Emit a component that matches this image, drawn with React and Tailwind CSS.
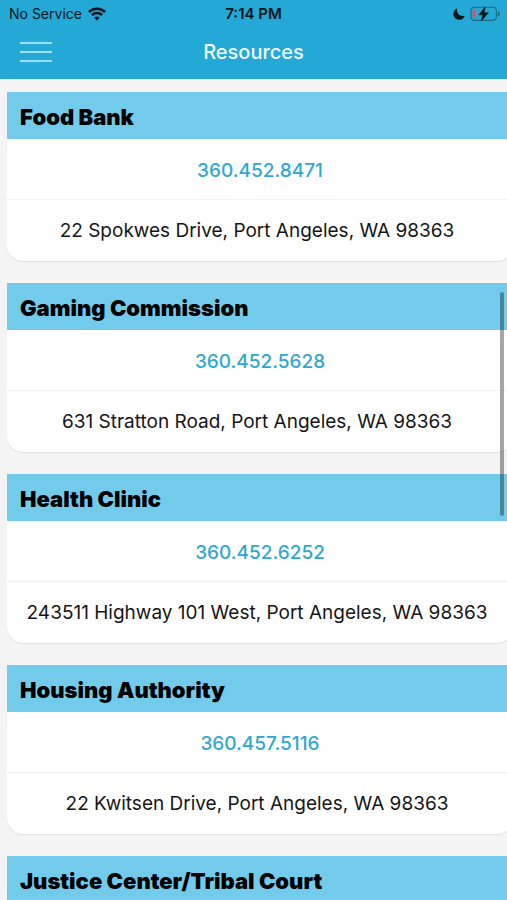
import React from 'react';

const resources = [
  { name: 'Food Bank', phone: '360.452.8471', address: '22 Spokwes Drive, Port Angeles, WA 98363' },
  { name: 'Gaming Commission', phone: '360.452.5628', address: '631 Stratton Road, Port Angeles, WA 98363' },
  { name: 'Health Clinic', phone: '360.452.6252', address: '243511 Highway 101 West, Port Angeles, WA 98363' },
  { name: 'Housing Authority', phone: '360.457.5116', address: '22 Kwitsen Drive, Port Angeles, WA 98363' },
  { name: 'Justice Center/Tribal Court' },
];

const WifiIcon = () => (
  <svg width="18" height="14" viewBox="0 0 18 14" fill="none" stroke="#04161d" strokeWidth="2.5">
    <path d="M0.9 5C5.3 0.6 12.7 0.6 17.1 5" />
    <path d="M3.9 8.2C6.7 5.4 11.3 5.4 14.1 8.2" />
    <path d="M9 13.4L6.3 10.7C7.8 9.2 10.2 9.2 11.7 10.7Z" fill="#04161d" stroke="none" />
  </svg>
);

const MoonIcon = () => (
  <svg width="12" height="12" viewBox="0 0 12 12" fill="#04161d">
    <path d="M4.2 0.3C2.9 4.9 6.6 9 11.7 7.9C10.6 10.5 8.5 11.8 6.2 11.8C3 11.8 0.4 9.3 0.4 6.1C0.4 3.4 1.9 1.2 4.2 0.3Z" />
  </svg>
);

const BatteryIcon = () => (
  <svg width="31" height="16" viewBox="0 0 31 16" fill="none">
    <rect x="1" y="1.2" width="25.4" height="13.2" rx="3.6" stroke="#17698a" strokeWidth="1.1" />
    <path d="M28 5.2C30.4 6 30.4 9.6 28 10.4Z" fill="#17698a" />
    <path d="M5.4 3.4V12.2H4C3.1 12.2 2.6 11.6 2.6 10.7V4.9C2.6 4 3.1 3.4 4 3.4Z" fill="#e0505c" />
    <path d="M15.4 0.8L8.8 8.8H12.8L11.2 15L18.4 6.8H14.2Z" fill="#04161d" stroke="#04161d" strokeWidth="0.6" />
  </svg>
);

const ResourceCard = ({ resource }) => (
  <section className="rounded-b-2xl bg-white shadow-[0_1px_1px_rgba(0,0,0,0.08)]">
    <h2 className="bg-[#73cbec] px-[13px] pt-2 pb-1 text-[22px] leading-[35px] font-black text-black">
      {resource.name}
    </h2>
    {resource.phone && (
      <div className="text-center text-[19px]">
        <a
          href={`tel:${resource.phone}`}
          className="block border-b border-[#f3f3f3] pt-[18px] pb-[14px] leading-7 font-medium text-[#2ea8d3]"
        >
          {resource.phone}
        </a>
        <p className="py-4 pr-[6px] leading-[29px] text-[#151515]">{resource.address}</p>
      </div>
    )}
  </section>
);

const App = () => {
  return (
    <div className="relative flex h-screen flex-col overflow-hidden bg-[#f4f4f4] font-['Inter','Liberation_Sans',sans-serif]">
      <header className="bg-[#24a8d6]">
        {/* Status bar */}
        <div className="grid grid-cols-3 items-center px-[6px] pt-1 leading-5 text-[#04161d]">
          <div className="flex items-center gap-[6px] pl-[3px] text-sm leading-5">
            <span>No Service</span>
            <WifiIcon />
          </div>
          <span className="text-center text-[15px] leading-5 font-semibold">7:14 PM</span>
          <div className="flex items-center justify-end gap-[5px]">
            <MoonIcon />
            <BatteryIcon />
          </div>
        </div>

        {/* Navigation bar */}
        <div className="grid h-[55px] grid-cols-3 items-center px-5">
          <button type="button" aria-label="Menu" className="flex w-8 flex-col gap-[7px]">
            <span className="h-[2px] w-full bg-[#9fe0f7]"></span>
            <span className="h-[2px] w-full bg-[#9fe0f7]"></span>
            <span className="h-[2px] w-full bg-[#9fe0f7]"></span>
          </button>
          <h1 className="text-center text-xl font-medium text-[#effaff]">Resources</h1>
        </div>
      </header>

      <main className="-mr-[6px] min-h-0 flex-1 overflow-hidden pt-[13px] pl-[7px]">
        <div className="flex flex-col gap-[22px]">
          {resources.map((resource) => (
            <ResourceCard key={resource.name} resource={resource} />
          ))}
        </div>
      </main>

      {/* Scroll indicator */}
      <div className="absolute top-[292px] right-[3px] h-56 w-1 rounded-full bg-black/35"></div>
    </div>
  );
};

export default App;
